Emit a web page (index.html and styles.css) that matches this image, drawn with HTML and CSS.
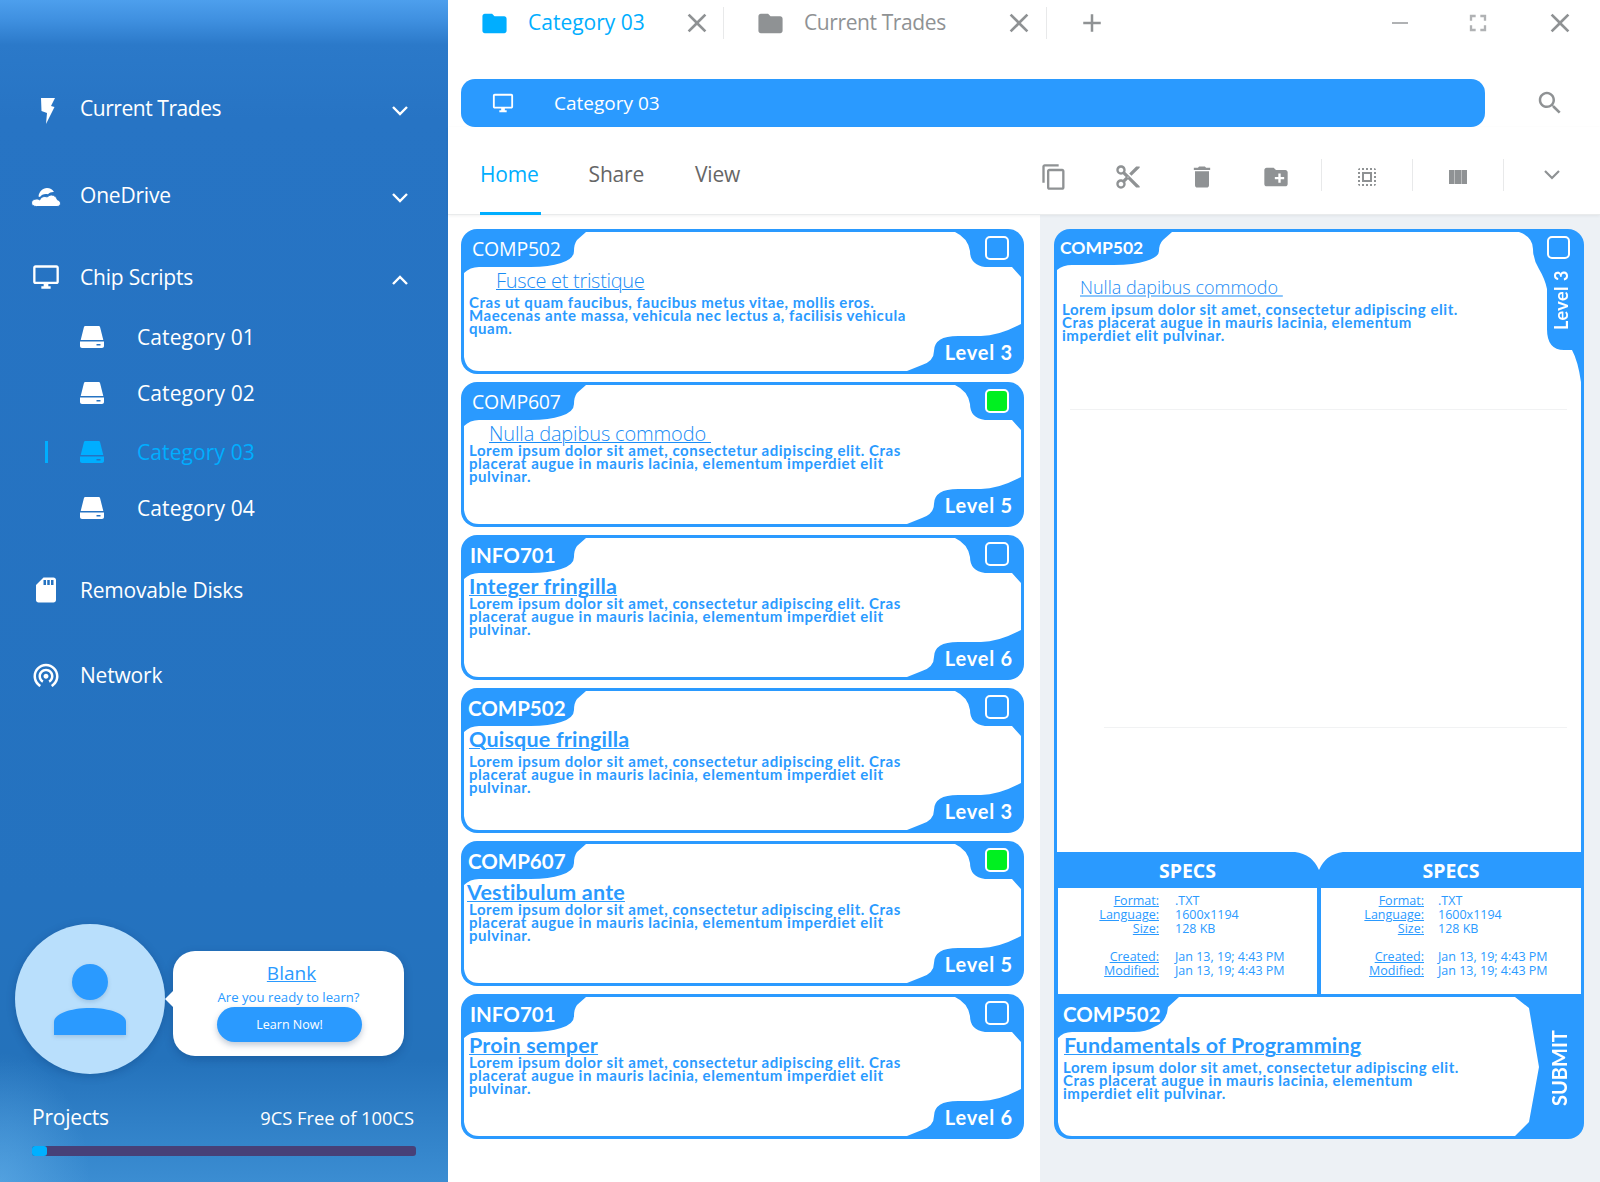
FILE: index.html
```html
<!DOCTYPE html>
<html lang="en">

<head>
    <meta charset="UTF-8">
    <title>Category 03</title>
    <meta name="viewport" content="width=device-width, initial-scale=1">
    <link rel="stylesheet" href="styles.css">
</head>

<body>
    <svg class="sprite" aria-hidden="true">
        <symbol id="i-close" viewBox="0 0 24 24"><path d="M19 6.41L17.59 5 12 10.59 6.41 5 5 6.41 10.59 12 5 17.59 6.41 19 12 13.41 17.59 19 19 17.59 13.41 12 19 6.41z"/></symbol>
        <symbol id="i-folder" viewBox="0 0 24 24"><path d="M10 4H4c-1.1 0-1.99.9-1.99 2L2 18c0 1.1.9 2 2 2h16c1.1 0 2-.9 2-2V8c0-1.1-.9-2-2-2h-8l-2-2z"/></symbol>
        <symbol id="i-desktop" viewBox="0 0 24 24"><path d="M21 2H3c-1.1 0-2 .9-2 2v12c0 1.1.9 2 2 2h7v2H8v2h8v-2h-2v-2h7c1.1 0 2-.9 2-2V4c0-1.1-.9-2-2-2zm0 14H3V4h18v12z"/></symbol>
        <symbol id="i-drive" viewBox="0 0 24 22"><path d="M5.5 0h13c.8 0 1.4.5 1.6 1.2L23.3 14H.7L3.9 1.2C4.1.5 4.7 0 5.5 0zM0 15.5h24V20c0 1.1-.9 2-2 2H2c-1.1 0-2-.9-2-2zM16.5 18v1.500h4V18z" fill-rule="evenodd"/></symbol>
    </svg>

    <div class="app">
        <aside class="sidebar">
            <nav class="nav">
                <a class="nav-row tight">
                    <span class="nav-icon bolt"><svg width="16" height="26" viewBox="0 0 16 26"><path d="M1 0H15L11 8l3.500 1L6 26l1-11-5.500-2z"/></svg></span>
                    Current Trades
                    <svg class="nav-chevron" width="18" height="12" viewBox="0 0 18 12"><path d="M2 2l7 7 7-7"/></svg>
                </a>
                <a class="nav-row">
                    <span class="nav-icon cloud"><svg width="30" height="20" viewBox="0 0 30 20"><path d="M7.500 9.500C8 5 11.500 1 16 1c3 0 5.500 1.500 7 4-2.200-.3-4.500.6-6 2.300-3.500-.8-6.500.4-8 2.700z"/><path class="cloud-front" d="M5.500 19.500H26c2.200 0 3.500-1.500 3.500-3.300 0-1.700-1.200-3-3-3.300C25.700 10 23 8 20.500 8c-1.800 0-3.300.8-4.200 2-3.400-1.300-6.500.2-7.600 3C6.700 11 .5 12 .5 16c0 2 2 3.500 5 3.500z"/></svg></span>
                    OneDrive
                    <svg class="nav-chevron" width="18" height="12" viewBox="0 0 18 12"><path d="M2 2l7 7 7-7"/></svg>
                </a>
                <a class="nav-row">
                    <span class="nav-icon"><svg width="28" height="28" viewBox="0 0 24 24"><use href="#i-desktop"/></svg></span>
                    Chip Scripts
                    <svg class="nav-chevron" width="18" height="12" viewBox="0 0 18 12"><path d="M2 10l7-7 7 7"/></svg>
                </a>
                <a class="nav-row sub">
                    <svg class="drive" width="24" height="22"><use href="#i-drive"/></svg>
                    Category 01
                </a>
                <a class="nav-row sub">
                    <svg class="drive" width="24" height="22"><use href="#i-drive"/></svg>
                    Category 02
                </a>
                <a class="nav-row sub active">
                    <span class="active-mark"></span>
                    <svg class="drive" width="24" height="22"><use href="#i-drive"/></svg>
                    Category 03
                </a>
                <a class="nav-row sub">
                    <svg class="drive" width="24" height="22"><use href="#i-drive"/></svg>
                    Category 04
                </a>
                <a class="nav-row">
                    <span class="nav-icon"><svg width="30" height="30" viewBox="0 0 24 24"><path d="M18 2h-8L4.020 8 4 20c0 1.100.9 2 2 2h12c1.100 0 2-.9 2-2V4c0-1.100-.9-2-2-2zm-6 6h-2V4h2v4zm3 0h-2V4h2v4zm3 0h-2V4h2v4z"/></svg></span>
                    Removable Disks
                </a>
                <a class="nav-row">
                    <span class="nav-icon"><svg width="30" height="30" viewBox="0 0 24 24"><path d="M12 11c-1.100 0-2 .9-2 2s.9 2 2 2 2-.9 2-2-.9-2-2-2zm6 2c0-3.310-2.690-6-6-6s-6 2.690-6 6c0 2.220 1.210 4.150 3 5.190l1-1.740c-1.190-.7-2-1.970-2-3.450 0-2.210 1.790-4 4-4s4 1.790 4 4c0 1.480-.81 2.750-2 3.450l1 1.740c1.790-1.040 3-2.970 3-5.190zM12 3C6.480 3 2 7.480 2 13c0 3.700 2.010 6.920 4.990 8.650l1-1.730C5.610 18.530 4 15.960 4 13c0-4.420 3.580-8 8-8s8 3.580 8 8c0 2.960-1.610 5.530-4 6.920l1 1.730c2.990-1.730 5-4.950 5-8.650 0-5.520-4.480-10-10-10z"/></svg></span>
                    Network
                </a>
            </nav>

            <div class="promo">
                <div class="avatar">
                    <svg width="72" height="71" viewBox="0 0 72 71"><circle cx="36" cy="18" r="18"/><path d="M0 71V58C0 50 16 44 36 44S72 50 72 58V71z"/></svg>
                </div>
                <div class="bubble">
                    <a class="bubble-name">Blank</a>
                    <p class="bubble-text">Are you ready to learn?</p>
                    <button class="bubble-btn">Learn Now!</button>
                </div>
            </div>

            <div class="storage">
                <div class="storage-labels">
                    <span class="storage-title">Projects</span>
                    <span class="storage-free">9CS Free of 100CS</span>
                </div>
                <div class="storage-bar"><div class="storage-fill" style="width: 4%"></div></div>
            </div>
        </aside>

        <main class="main">
            <div class="tabbar">
                <div class="tab current">
                    <svg class="tab-folder" width="29" height="29"><use href="#i-folder"/></svg>
                    <span>Category 03</span>
                    <svg class="tab-close" width="32" height="32"><use href="#i-close"/></svg>
                </div>
                <div class="tab second">
                    <svg class="tab-folder" width="29" height="29"><use href="#i-folder"/></svg>
                    <span>Current Trades</span>
                    <svg class="tab-close" width="32" height="32"><use href="#i-close"/></svg>
                </div>
                <svg class="tab-add" width="30" height="30" viewBox="0 0 24 24"><path d="M19 13h-6v6h-2v-6H5v-2h6V5h2v6h6v2z"/></svg>
                <div class="win-controls">
                    <svg class="win-min" width="24" height="24" viewBox="0 0 24 24"><rect x="4" y="11" width="16" height="2"/></svg>
                    <svg class="win-max" width="28" height="28" viewBox="0 0 24 24"><path d="M7 14H5v5h5v-2H7v-3zm-2-4h2V7h3V5H5v5zm12 7h-3v2h5v-5h-2v3zM14 5v2h3v3h2V5h-5z"/></svg>
                    <svg width="32" height="32"><use href="#i-close"/></svg>
                </div>
            </div>

            <div class="pathrow">
                <div class="pathbar">
                    <svg width="22" height="22"><use href="#i-desktop"/></svg>
                    <span>Category 03</span>
                </div>
                <svg class="search" width="30" height="30" viewBox="0 0 24 24"><path d="M15.500 14h-.79l-.28-.27C15.410 12.590 16 11.110 16 9.500 16 5.910 13.090 3 9.500 3S3 5.910 3 9.500 5.910 16 9.500 16c1.610 0 3.090-.59 4.230-1.570l.27.280v.79l5 4.990L20.490 19l-4.990-5zm-6 0C7.010 14 5 11.990 5 9.500S7.010 5 9.500 5 14 7.010 14 9.500 11.990 14 9.500 14z"/></svg>
            </div>

            <div class="toolbar">
                <a class="tool-tab on">Home</a>
                <a class="tool-tab">Share</a>
                <a class="tool-tab">View</a>
                <div class="tools">
                    <span class="tool"><svg width="28" height="28" viewBox="0 0 24 24"><path d="M16 1H4c-1.100 0-2 .9-2 2v14h2V3h12V1zm3 4H8c-1.100 0-2 .9-2 2v14c0 1.100.9 2 2 2h11c1.100 0 2-.9 2-2V7c0-1.100-.9-2-2-2zm0 16H8V7h11v14z"/></svg></span>
                    <span class="tool"><svg width="28" height="28" viewBox="0 0 24 24"><path d="M9.640 7.640c.23-.5.360-1.050.360-1.640 0-2.210-1.790-4-4-4S2 3.790 2 6s1.790 4 4 4c.59 0 1.140-.13 1.640-.36L10 12l-2.360 2.360C7.140 14.130 6.590 14 6 14c-2.210 0-4 1.790-4 4s1.790 4 4 4 4-1.790 4-4c0-.59-.13-1.140-.36-1.640L12 14l7 7h3v-1L9.640 7.640zM6 8c-1.100 0-2-.89-2-2s.9-2 2-2 2 .89 2 2-.9 2-2 2zm0 12c-1.100 0-2-.89-2-2s.9-2 2-2 2 .89 2 2-.9 2-2 2zm6-7.500c-.28 0-.5-.22-.5-.5s.22-.5.5-.5.5.22.5.5-.22.5-.5.5zM19 3l-6 6 2 2 7-7V3z"/></svg></span>
                    <span class="tool"><svg width="28" height="28" viewBox="0 0 24 24"><path d="M6 19c0 1.100.9 2 2 2h8c1.100 0 2-.9 2-2V7H6v12zM19 4h-3.500l-1-1h-5l-1 1H5v2h14V4z"/></svg></span>
                    <span class="tool gap-after"><svg width="28" height="28" viewBox="0 0 24 24"><path d="M20 6h-8l-2-2H4c-1.110 0-1.990.89-1.990 2L2 18c0 1.110.89 2 2 2h16c1.110 0 2-.89 2-2V8c0-1.110-.89-2-2-2zm-1 8h-3v3h-2v-3h-3v-2h3V9h2v3h3v2z"/></svg></span>
                    <span class="tool split"><svg width="24" height="24" viewBox="0 0 24 24"><path d="M3 5h2V3c-1.100 0-2 .9-2 2zm0 8h2v-2H3v2zm4 8h2v-2H7v2zM3 9h2V7H3v2zm10-6h-2v2h2V3zm6 0v2h2c0-1.100-.9-2-2-2zM5 21v-2H3c0 1.100.9 2 2 2zm-2-4h2v-2H3v2zM9 3H7v2h2V3zm2 18h2v-2h-2v2zm8-8h2v-2h-2v2zm0 8c1.100 0 2-.9 2-2h-2v2zm0-12h2V7h-2v2zm0 8h2v-2h-2v2zm-4 4h2v-2h-2v2zm0-16h2V3h-2v2zM7 17h10V7H7v10zm2-8h6v6H9V9z"/></svg></span>
                    <span class="tool split"><svg width="24" height="24" viewBox="0 0 24 24"><path d="M3 5h5.600v14H3zM9 5h6v14H9zM15.400 5H21v14h-5.600z"/></svg></span>
                    <span class="tool split last"><svg class="tool-chevron" width="18" height="12" viewBox="0 0 18 12"><path d="M2 2l7 7 7-7"/></svg></span>
                </div>
            </div>

            <div class="content">
                <section class="list">
                    <article class="card">
                        <header class="card-head"><span class="code plain">COMP502</span><span class="check"></span></header>
                        <a class="card-title light fusce">Fusce et tristique</a>
                        <p class="card-text loose">Cras ut quam faucibus, faucibus metus vitae, mollis eros.<br>Maecenas ante massa, vehicula nec lectus a, facilisis vehicula<br>quam.</p>
                        <span class="level">Level 3</span>
                    </article>
                    <article class="card">
                        <header class="card-head"><span class="code plain">COMP607</span><span class="check on"></span></header>
                        <a class="card-title light nulla">Nulla dapibus commodo&nbsp;</a>
                        <p class="card-text">Lorem ipsum dolor sit amet, consectetur adipiscing elit. Cras<br>placerat augue in mauris lacinia, elementum imperdiet elit<br>pulvinar.</p>
                        <span class="level">Level 5</span>
                    </article>
                    <article class="card">
                        <header class="card-head"><span class="code">INFO701</span><span class="check"></span></header>
                        <a class="card-title">Integer fringilla</a>
                        <p class="card-text">Lorem ipsum dolor sit amet, consectetur adipiscing elit. Cras<br>placerat augue in mauris lacinia, elementum imperdiet elit<br>pulvinar.</p>
                        <span class="level">Level 6</span>
                    </article>
                    <article class="card">
                        <header class="card-head"><span class="code shift">COMP502</span><span class="check"></span></header>
                        <a class="card-title">Quisque fringilla</a>
                        <p class="card-text loose">Lorem ipsum dolor sit amet, consectetur adipiscing elit. Cras<br>placerat augue in mauris lacinia, elementum imperdiet elit<br>pulvinar.</p>
                        <span class="level">Level 3</span>
                    </article>
                    <article class="card">
                        <header class="card-head"><span class="code shift">COMP607</span><span class="check on"></span></header>
                        <a class="card-title shift">Vestibulum ante</a>
                        <p class="card-text">Lorem ipsum dolor sit amet, consectetur adipiscing elit. Cras<br>placerat augue in mauris lacinia, elementum imperdiet elit<br>pulvinar.</p>
                        <span class="level">Level 5</span>
                    </article>
                    <article class="card">
                        <header class="card-head"><span class="code">INFO701</span><span class="check"></span></header>
                        <a class="card-title">Proin semper</a>
                        <p class="card-text">Lorem ipsum dolor sit amet, consectetur adipiscing elit. Cras<br>placerat augue in mauris lacinia, elementum imperdiet elit<br>pulvinar.</p>
                        <span class="level">Level 6</span>
                    </article>
                </section>

                <section class="detail-pane">
                    <div class="detail">
                        <div class="detail-top">
                            <header class="card-head"><span class="code small">COMP502</span><span class="check small"></span></header>
                            <a class="detail-title">Nulla dapibus commodo&nbsp;</a>
                            <p class="card-text detail-text">Lorem ipsum dolor sit amet, consectetur adipiscing elit.<br>Cras placerat augue in mauris lacinia, elementum<br>imperdiet elit pulvinar.</p>
                            <span class="level-side">Level 3</span>
                            <hr class="faint first">
                            <hr class="faint second">
                        </div>

                        <div class="specs">
                            <div class="spec">
                                <h3>SPECS</h3>
                                <dl>
                                    <dt>Format:</dt><dd>.TXT</dd>
                                    <dt>Language:</dt><dd>1600x1194</dd>
                                    <dt>Size:</dt><dd>128 KB</dd>
                                    <dt class="spaced">Created:</dt><dd class="spaced">Jan 13, 19; 4:43 PM</dd>
                                    <dt>Modified:</dt><dd>Jan 13, 19; 4:43 PM</dd>
                                </dl>
                            </div>
                            <div class="spec">
                                <h3>SPECS</h3>
                                <dl>
                                    <dt>Format:</dt><dd>.TXT</dd>
                                    <dt>Language:</dt><dd>1600x1194</dd>
                                    <dt>Size:</dt><dd>128 KB</dd>
                                    <dt class="spaced">Created:</dt><dd class="spaced">Jan 13, 19; 4:43 PM</dd>
                                    <dt>Modified:</dt><dd>Jan 13, 19; 4:43 PM</dd>
                                </dl>
                            </div>
                        </div>

                        <div class="detail-bottom">
                            <header class="card-head"><span class="code">COMP502</span></header>
                            <a class="card-title">Fundamentals of Programming</a>
                            <p class="card-text detail-text-b">Lorem ipsum dolor sit amet, consectetur adipiscing elit.<br>Cras placerat augue in mauris lacinia, elementum<br>imperdiet elit pulvinar.</p>
                            <span class="submit">SUBMIT</span>
                        </div>
                    </div>
                </section>
            </div>
        </main>
    </div>
</body>

</html>
```

FILE: styles.css
```css
* {
    box-sizing: border-box;
}

body {
    margin: 0;
    height: 1182px;
    overflow: hidden;
    font-family: "Open Sans", sans-serif;
    color: #2a9aff;
    background: #fff;
}

a {
    display: block;
}

p {
    margin: 0;
}

.sprite {
    display: none;
}

.app {
    display: flex;
    height: 100%;
}

/* sidebar */
.sidebar {
    width: 448px;
    flex: none;
    display: flex;
    flex-direction: column;
    color: #fff;
    background:
        radial-gradient(90px 130px at 0 100%, rgba(110, 185, 240, .45), rgba(110, 185, 240, 0)),
        linear-gradient(to bottom, #4d9fed 0, #3f90e0 20px, #2b79c9 45px, #2774c4 120px, #2472bf 900px, #2472bb 1060px, #3b8dd2 1182px);
}

.nav {
    display: grid;
    grid-template-rows: 87px 82px 60px 56px 59px 56px 82px 85px 40px;
    padding-top: 88px;
}

.nav-row {
    position: relative;
    height: 40px;
    display: flex;
    align-items: center;
    padding-left: 80px;
    font-size: 21px;
    letter-spacing: -.2px;
}

.nav-row.tight {
    letter-spacing: -.45px;
}

.nav-icon {
    position: absolute;
    left: 26px;
    width: 40px;
    display: flex;
    justify-content: center;
    fill: #fff;
}

.nav-icon.bolt {
    margin: 6px 0 0 2px;
}

.nav-icon.cloud {
    margin-top: 3px;
}

.cloud-front {
    stroke: #2774c4;
    stroke-width: 1;
}

.nav-chevron {
    position: absolute;
    left: 391px;
    margin-top: 5px;
    fill: none;
    stroke: #fff;
    stroke-width: 2.4;
}

.nav-row.sub {
    padding-left: 137px;
    letter-spacing: .1px;
}

.drive {
    position: absolute;
    left: 80px;
    fill: #fff;
}

.active {
    color: #00aeff;
}

.active .drive {
    fill: #00aeff;
}

.active-mark {
    position: absolute;
    left: 45px;
    top: 9px;
    width: 3px;
    height: 22px;
    background: #00aeff;
}

.promo {
    position: absolute;
    top: 924px;
    left: 15px;
    display: flex;
    align-items: center;
}

.avatar {
    width: 150px;
    height: 150px;
    border-radius: 50%;
    background: #b9dffc;
    box-shadow: 0 2px 8px rgba(0, 40, 90, .25);
    display: flex;
    align-items: center;
    justify-content: center;
    fill: #2a9aff;
}

.avatar svg {
    filter: drop-shadow(0 2px 2px rgba(0, 40, 90, .15));
}

.bubble {
    position: relative;
    margin-left: 8px;
    margin-top: 9px;
    width: 231px;
    height: 105px;
    border-radius: 22px;
    background: #fff;
    box-shadow: 0 3px 8px rgba(0, 40, 90, .25);
    color: #2a9aff;
    text-align: center;
    padding-top: 9px;
}

.bubble::before {
    content: "";
    position: absolute;
    left: -8px;
    top: 40px;
    border-right: 8px solid #fff;
    border-top: 8px solid transparent;
    border-bottom: 8px solid transparent;
}

.bubble-name {
    font-size: 19px;
    line-height: 27px;
    text-decoration: underline;
    margin-left: 6px;
}

.bubble-text {
    font-size: 13.200px;
    line-height: 20px;
}

.bubble-btn {
    display: block;
    width: 145px;
    height: 35px;
    margin: 0 0 0 44px;
    border: none;
    border-radius: 18px;
    background: #2a9aff;
    color: #fff;
    font: 12.500px "Open Sans", sans-serif;
    box-shadow: 0 3px 6px rgba(0, 40, 90, .25);
}

.storage {
    position: absolute;
    top: 1100px;
    left: 32px;
    width: 384px;
}

.storage-labels {
    display: flex;
    justify-content: space-between;
    align-items: center;
    height: 34px;
    padding-right: 2px;
}

.storage-title {
    font-size: 21px;
    letter-spacing: -.2px;
}

.storage-free {
    font-size: 18.300px;
}

.storage-bar {
    margin-top: 12px;
    height: 10px;
    border-radius: 3px;
    background: #474078;
}

.storage-fill {
    height: 100%;
    border-radius: 3px;
    background: #00b0ff;
}

/* main column */
.main {
    flex: 1;
    display: flex;
    flex-direction: column;
    min-width: 0;
}

.tabbar {
    height: 39px;
    padding-top: 7px;
    display: flex;
    fill: #8f9294;
    color: #8f9294;
    font-size: 21px;
}

.tab {
    height: 32px;
    display: flex;
    align-items: center;
    border-right: 1px solid #e8e9ea;
    padding: 0 10px 0 32px;
}

.tab span {
    margin-top: -2px;
}

.tab.current {
    width: 276px;
    color: #00aeff;
}

.tab.current .tab-folder {
    fill: #00aeff;
}

.tab.second {
    width: 323px;
    padding-right: 11px;
    letter-spacing: -.4px;
}

.tab-folder {
    margin-right: 19px;
}

.tab-close {
    margin-left: auto;
}

.tab-add {
    margin: 1px 0 0 30px;
}

.win-controls {
    margin-left: auto;
    width: 212px;
    padding-right: 24px;
    height: 32px;
    display: flex;
    justify-content: space-between;
    align-items: center;
}

.win-min,
.win-max {
    fill: #b0b2b4;
}

.pathrow {
    height: 48px;
    margin-top: 40px;
    padding-left: 13px;
    display: flex;
    align-items: center;
}

.pathbar {
    width: 1024px;
    height: 48px;
    border-radius: 14px;
    background: #2a9aff;
    color: #fff;
    fill: #fff;
    display: flex;
    align-items: center;
    padding-left: 31px;
    font-size: 19px;
}

.pathbar span {
    margin-left: 40px;
}

.search {
    margin-left: 50px;
    fill: #8f9294;
}

.toolbar {
    height: 88px;
    display: flex;
    align-items: stretch;
    padding-left: 32px;
    border-bottom: 1px solid #e9ebec;
    box-shadow: 0 1px 3px rgba(0, 0, 0, .06);
    position: relative;
}

.tool-tab {
    color: #666;
    font-size: 21px;
    letter-spacing: -.2px;
    line-height: 94px;
    margin-right: 51px;
    border-bottom: 3px solid transparent;
    height: 88px;
}

.tool-tab.on {
    color: #00aeff;
    border-bottom-color: #00aeff;
    padding-right: 2px;
    margin-right: 48px;
}

.tools {
    margin-left: auto;
    margin-top: 32px;
    height: 32px;
    display: flex;
    fill: #8f9294;
}

.tool {
    width: 74px;
    height: 32px;
    display: flex;
    align-items: center;
    justify-content: center;
}

.tool svg {
    margin-top: 4px;
}

.gap-after {
    margin-right: 8px;
}

.tool.split {
    width: 91px;
    border-left: 1px solid #e8e9ea;
}

.tool.last {
    width: 97px;
}

.tool .tool-chevron {
    margin-top: 0;
    fill: none;
    stroke: #8f9294;
    stroke-width: 2.2;
}

.content {
    flex: 1;
    display: grid;
    grid-template-columns: 592px 560px;
}

.list {
    display: flex;
    flex-direction: column;
    gap: 8px;
    padding: 14px 0 0 13px;
    background: #fff;
}

/* cards */
.card {
    position: relative;
    width: 563px;
    height: 145px;
    border-radius: 16px;
    background: #2a9aff;
}

.card::before {
    content: "";
    position: absolute;
    inset: 0;
    background: #fff;
    clip-path: path("M125 3 L116 11 Q113 15 113 22 Q113 30 100 34 Q88 38 70 38 L18 38 Q9 38 3 44 L3 128 Q5 142 18 142 L446 142 L461 136 Q473 132 473 122 Q473 107 497 107 L520 107 Q538 107 560 95 L560 48 L551 38 L524 38 Q509 36 509 22 Q507 9 494 3 Z");
}

.card > * {
    position: relative;
}

.card-head {
    height: 39px;
    display: flex;
    align-items: center;
    justify-content: space-between;
    padding: 0 15px 0 9px;
}

.code {
    font-family: Lato, sans-serif;
    font-weight: 700;
    font-size: 20.500px;
    color: #fff;
}

.code.shift {
    margin-left: -2px;
}

.code.plain {
    font-family: "Open Sans", sans-serif;
    font-weight: 400;
    font-size: 19.500px;
    letter-spacing: -.2px;
    padding-left: 2px;
}

.code.small {
    font-size: 17.500px;
    margin-left: -3px;
}

.check {
    align-self: flex-start;
    width: 24px;
    height: 24px;
    margin-top: 7px;
    border: 2px solid #fff;
    border-radius: 5px;
}

.check.on {
    background: #00f020;
}

.check.small {
    width: 23px;
    height: 23px;
}

.card-title {
    height: 26px;
    line-height: 24px;
    padding-left: 8px;
    font-family: Lato, sans-serif;
    font-weight: 700;
    font-size: 21.500px;
    letter-spacing: .2px;
    text-decoration: underline;
    text-decoration-thickness: 1px;
    width: max-content;
}

.card-title.shift {
    padding-left: 6px;
}

.card-title.light {
    line-height: 26px;
    font-family: "Open Sans", sans-serif;
    font-weight: 300;
    font-size: 20px;
    color: #1a8cf5;
}

.fusce {
    padding-left: 35px;
    letter-spacing: -.3px;
}

.nulla {
    padding-left: 28px;
    letter-spacing: -.15px;
}

.card-text {
    margin: -3px 0 0 8px;
    font-family: Lato, sans-serif;
    font-weight: 700;
    font-size: 15px;
    letter-spacing: .55px;
    line-height: 13px;
    white-space: nowrap;
}

.card-text.loose {
    margin-top: 2px;
}

.level {
    position: absolute;
    right: 11px;
    bottom: 9px;
    color: #fff;
    font-family: Lato, sans-serif;
    font-weight: 700;
    font-size: 20px;
    letter-spacing: .8px;
    line-height: 26px;
}

/* detail column */
.detail-pane {
    background: #edf1f5;
    padding: 14px 0 0 14px;
}

.detail {
    width: 530px;
    height: 910px;
    border-radius: 16px;
    background: #2a9aff;
    overflow: hidden;
}

.detail-top,
.detail-bottom {
    position: relative;
}

.detail-top {
    height: 623px;
}

.detail-top::before,
.detail-bottom::before {
    content: "";
    position: absolute;
    inset: 0;
    background: #fff;
    clip-path: path("M118 3 L109 11 Q105 15 105 22 Q105 28 92 32 Q80 36 60 36 L18 36 Q9 36 3 41 L3 623 L241 623 Q258 625 265 641 Q272 625 289 623 L527 623 L527 153 Q524 132 518 121 L510 121 Q493 121 493 100 L493 60 Q491 50 485 40 Q479 30 479 20 Q479 8 465 3 Z");
}

.detail-top::before {
    height: 650px;
}

.detail-bottom::before {
    clip-path: path("M125 3 L114 13 Q113 28 100 33 Q92 38 80 38 L18 38 Q9 38 4 44 L4 128 Q6 142 18 142 L461 142 L475 128 L485 73 L475 14 L461 3 Z");
}

.detail-top > *,
.detail-bottom > * {
    position: relative;
}

.detail-top .card-head {
    padding-right: 14px;
    padding-bottom: 3px;
}

.detail-title {
    width: max-content;
    margin: 6px 0 0 26px;
    font-weight: 300;
    font-size: 18px;
    line-height: 26px;
    color: #1a8cf5;
    text-decoration: underline;
    text-decoration-color: #8cc6fb;
    text-decoration-thickness: 2px;
    height: 26px;
}

.detail-text {
    margin: 3px 0 0 8px;
}

.level-side {
    position: absolute;
    top: 41px;
    left: 496px;
    height: 60px;
    writing-mode: vertical-rl;
    transform: rotate(180deg);
    color: #fff;
    font-family: Lato, sans-serif;
    font-weight: 700;
    font-size: 18px;
    letter-spacing: .5px;
    line-height: 22px;
    text-align: center;
}

.faint {
    position: absolute;
    margin: 0;
    height: 1px;
    border: none;
    background: #f1f2f3;
    right: 17px;
}

.faint.first {
    top: 180px;
    left: 16px;
}

.faint.second {
    top: 498px;
    left: 50px;
}

.specs {
    position: relative;
    height: 142px;
    padding: 0 3px 0 4px;
    display: grid;
    grid-template-columns: 259px 260px;
    column-gap: 4px;
}

.spec h3 {
    margin: 0;
    height: 36px;
    color: #fff;
    font-size: 19.500px;
    font-weight: 700;
    line-height: 38px;
    text-align: center;
}

.spec dl {
    margin: 0;
    height: 106px;
    background: #fff;
    padding-top: 6px;
    display: grid;
    grid-template-columns: 101px 1fr;
    column-gap: 16px;
    align-content: start;
    font-size: 12.500px;
    line-height: 14px;
}

.spec + .spec dl {
    grid-template-columns: 103px 1fr;
    column-gap: 14px;
}

.spec dt {
    text-align: right;
    text-decoration: underline;
}

.spec dd {
    margin: 0;
}

.spec .spaced {
    margin-top: 14px;
}

.detail-bottom {
    height: 145px;
}

.detail-bottom .card-title {
    padding-left: 10px;
}

.detail-text-b {
    margin: 2px 0 0 9px;
}

.submit {
    position: absolute;
    top: 37px;
    left: 491px;
    height: 75px;
    writing-mode: vertical-rl;
    transform: rotate(180deg);
    color: #fff;
    font-family: Lato, sans-serif;
    font-weight: 700;
    font-size: 20px;
    line-height: 28px;
    text-align: center;
}
```
